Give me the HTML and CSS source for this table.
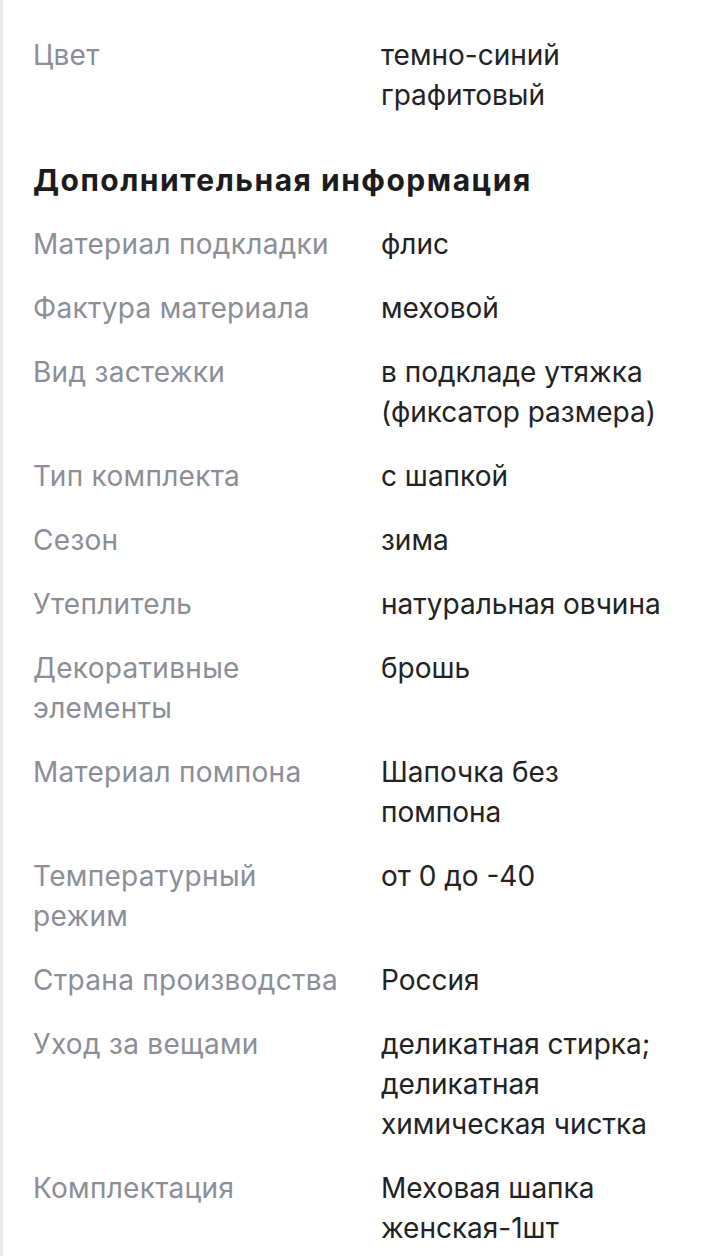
FILE: index.html
```html
<!DOCTYPE html>
<html lang="ru">
<head>
<meta charset="utf-8">
<link rel="stylesheet" href="styles.css">
</head>
<body>
<div class="page">
  <dl class="specs">
    <div class="row"><dt>Цвет</dt><dd>темно-синий<br>графитовый</dd></div>
  </dl>
  <h2 class="title">Дополнительная информация</h2>
  <dl class="specs">
    <div class="row"><dt>Материал подкладки</dt><dd>флис</dd></div>
    <div class="row"><dt>Фактура материала</dt><dd>меховой</dd></div>
    <div class="row"><dt>Вид застежки</dt><dd>в подкладе утяжка<br>(фиксатор размера)</dd></div>
    <div class="row"><dt>Тип комплекта</dt><dd>с шапкой</dd></div>
    <div class="row"><dt>Сезон</dt><dd>зима</dd></div>
    <div class="row"><dt>Утеплитель</dt><dd>натуральная овчина</dd></div>
    <div class="row"><dt>Декоративные<br>элементы</dt><dd>брошь</dd></div>
    <div class="row"><dt>Материал помпона</dt><dd>Шапочка без<br>помпона</dd></div>
    <div class="row"><dt>Температурный<br>режим</dt><dd>от 0 до -40</dd></div>
    <div class="row"><dt>Страна производства</dt><dd>Россия</dd></div>
    <div class="row"><dt>Уход за вещами</dt><dd>деликатная стирка;<br>деликатная<br>химическая чистка</dd></div>
    <div class="row"><dt>Комплектация</dt><dd>Меховая шапка<br>женская-1шт</dd></div>
  </dl>
</div>
</body>
</html>
```

FILE: styles.css
```css
html, body {
  margin: 0;
  padding: 0;
  background: #ffffff;
}
body {
  font-family: Inter, "Noto Sans", sans-serif;
  -webkit-font-smoothing: antialiased;
}
.page {
  min-height: 1256px;
  box-sizing: border-box;
  border-left: 3px solid #e9e9eb;
  padding: 35px 30px 0 30px;
}
.specs {
  margin: 0;
  display: flex;
  flex-direction: column;
  gap: 24px;
}
.row {
  display: grid;
  grid-template-columns: 348px 1fr;
}
dt {
  margin: 0;
  font-size: 28px;
  line-height: 40px;
  letter-spacing: 0.3px;
  color: #8b8e98;
  white-space: nowrap;
}
dd {
  margin: 0;
  font-size: 28px;
  line-height: 40px;
  color: #222225;
  white-space: nowrap;
}
.title {
  margin: 45px 0 24px 0;
  font-size: 30px;
  line-height: 40px;
  font-weight: 700;
  letter-spacing: 1.5px;
  color: #1c1c1e;
}
```
